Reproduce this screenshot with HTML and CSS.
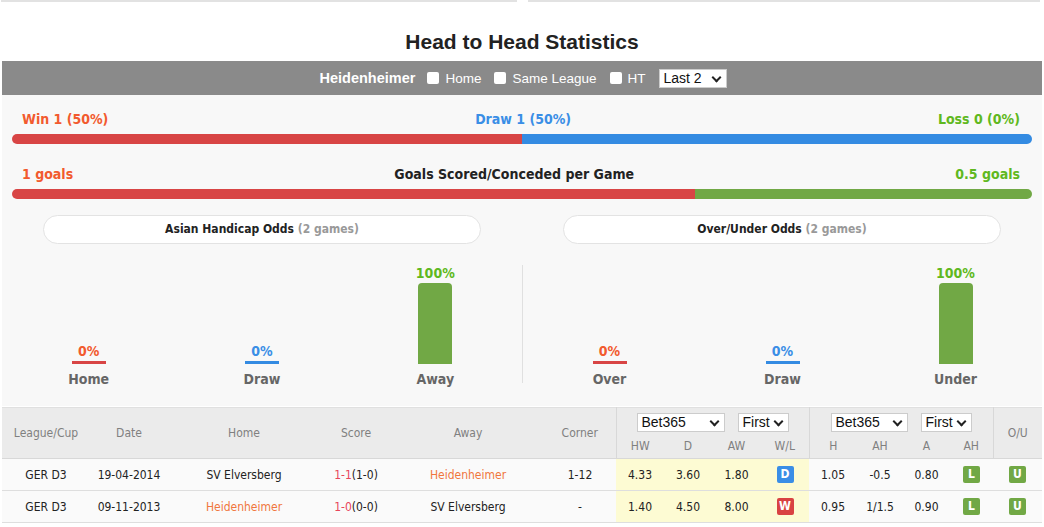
FILE: index.html
```html
<!DOCTYPE html>
<html>
<head>
<meta charset="utf-8">
<link rel="stylesheet" href="styles.css">
</head>
<body>
<div class="page">
  <div class="topline"><span class="tl-left"></span><span class="tl-right"></span></div>
  <h1 class="title">Head to Head Statistics</h1>
  <div class="filterbar">
    <span class="team">Heidenheimer</span>
    <label class="chk"><span class="box"></span>Home</label>
    <label class="chk"><span class="box"></span>Same League</label>
    <label class="chk"><span class="box"></span>HT</label>
    <span class="sel sel-last">Last 2<span class="caret"></span></span>
  </div>
  <div class="panel">
    <div class="stat-labels">
      <span class="c-red">Win 1 (50%)</span>
      <span class="c-blue">Draw 1 (50%)</span>
      <span class="c-green">Loss 0 (0%)</span>
    </div>
    <div class="bar">
      <span class="seg red" style="width:50%"></span>
      <span class="seg blue" style="width:50%"></span>
    </div>
    <div class="stat-labels second">
      <span class="c-red">1 goals</span>
      <span class="c-black">Goals Scored/Conceded per Game</span>
      <span class="c-green">0.5 goals</span>
    </div>
    <div class="bar">
      <span class="seg red" style="width:67%"></span>
      <span class="seg green" style="width:33%"></span>
    </div>
    <div class="halves">
      <div class="half">
        <div class="pill">Asian Handicap Odds <span class="muted">(2 games)</span></div>
        <div class="chart">
          <div class="col"><span class="pct c-red">0%</span><span class="vbar red" style="height:3px"></span><span class="name">Home</span></div>
          <div class="col"><span class="pct c-blue">0%</span><span class="vbar blue" style="height:3px"></span><span class="name">Draw</span></div>
          <div class="col"><span class="pct c-green">100%</span><span class="vbar green tall" style="height:82px"></span><span class="name">Away</span></div>
        </div>
      </div>
      <div class="half">
        <div class="pill">Over/Under Odds <span class="muted">(2 games)</span></div>
        <div class="chart divided">
          <div class="col"><span class="pct c-red">0%</span><span class="vbar red" style="height:3px"></span><span class="name">Over</span></div>
          <div class="col"><span class="pct c-blue">0%</span><span class="vbar blue" style="height:3px"></span><span class="name">Draw</span></div>
          <div class="col"><span class="pct c-green">100%</span><span class="vbar green tall" style="height:82px"></span><span class="name">Under</span></div>
        </div>
      </div>
    </div>
  </div>
  <table class="h2h">
    <colgroup>
      <col style="width:88px"><col style="width:78px"><col style="width:152px"><col style="width:72px"><col style="width:152px"><col style="width:72px">
      <col style="width:48px"><col style="width:48px"><col style="width:49px"><col style="width:48px">
      <col style="width:48px"><col style="width:46px"><col style="width:47px"><col style="width:43px">
      <col style="width:49px">
    </colgroup>
    <thead>
      <tr class="hr1">
        <th rowspan="2">League/Cup</th>
        <th rowspan="2">Date</th>
        <th rowspan="2">Home</th>
        <th rowspan="2">Score</th>
        <th rowspan="2">Away</th>
        <th rowspan="2">Corner</th>
        <th colspan="4" class="grp sels"><span class="sel sel-bet">Bet365<span class="caret"></span></span><span class="sel sel-first">First<span class="caret"></span></span></th>
        <th colspan="4" class="grp sels"><span class="sel sel-bet2">Bet365<span class="caret"></span></span><span class="sel sel-first">First<span class="caret"></span></span></th>
        <th rowspan="2" class="grp">O/U</th>
      </tr>
      <tr class="hr2">
        <th class="gl">HW</th><th>D</th><th>AW</th><th>W/L</th>
        <th class="gl">H</th><th>AH</th><th>A</th><th>AH</th>
      </tr>
    </thead>
    <tbody>
      <tr>
        <td>GER D3</td>
        <td>19-04-2014</td>
        <td>SV Elversberg</td>
        <td><span class="sc">1-1</span>(1-0)</td>
        <td class="team-c">Heidenheimer</td>
        <td>1-12</td>
        <td class="y">4.33</td><td class="y">3.60</td><td class="y">1.80</td><td class="y"><span class="badge b-blue">D</span></td>
        <td>1.05</td><td>-0.5</td><td>0.80</td><td><span class="badge b-green">L</span></td>
        <td><span class="badge b-green">U</span></td>
      </tr>
      <tr>
        <td>GER D3</td>
        <td>09-11-2013</td>
        <td class="team-c">Heidenheimer</td>
        <td><span class="sc">1-0</span>(0-0)</td>
        <td>SV Elversberg</td>
        <td>-</td>
        <td class="y">1.40</td><td class="y">4.50</td><td class="y">8.00</td><td class="y"><span class="badge b-red">W</span></td>
        <td>0.95</td><td>1/1.5</td><td>0.90</td><td><span class="badge b-green">L</span></td>
        <td><span class="badge b-green">U</span></td>
      </tr>
    </tbody>
  </table>
</div>
</body>
</html>
```
FILE: styles.css
```css
html, body { margin: 0; padding: 0; background: #fff; }
body { font-family: "DejaVu Sans Condensed", "DejaVu Sans", sans-serif; color: #222; }
.page { width: 1040px; margin-left: 2px; }

.topline { display: flex; height: 2px; margin-left: -1px; }
.tl-left { width: 516px; background: #e2e2e2; }
.tl-right { width: 512px; margin-left: 11px; background: #e2e2e2; }

.title {
  margin: 0; height: 59px; box-sizing: border-box; padding-top: 28px;
  text-align: center; font-family: "Liberation Sans Narrow", "Liberation Sans", sans-serif;
  font-weight: bold; font-size: 21px; line-height: 24px; color: #222;
}

.filterbar {
  height: 34px; background: #8a8a8a; display: flex; align-items: center; justify-content: center;
  font-family: "Liberation Sans", Arial, sans-serif; font-size: 13.5px; color: #fff;
  padding-left: 2px;
}
.team { font-weight: bold; margin-right: 12px; font-size: 14.5px; }
.chk { display: flex; align-items: center; margin-right: 13px; }
.box { width: 12px; height: 12px; background: #fff; border-radius: 2px; margin-right: 6px; }
.sel {
  position: relative; display: inline-block; background: #fff; color: #111; box-sizing: border-box;
  border: 1px solid #ccc; height: 19px; line-height: 17px; font-size: 14px; padding-left: 4px;
  font-family: "Liberation Sans", Arial, sans-serif; text-align: left; vertical-align: top;
}
.caret {
  position: absolute; right: 6px; top: 4px; width: 5px; height: 5px;
  border-right: 2px solid #222; border-bottom: 2px solid #222; transform: rotate(45deg);
}
.sel-last { width: 68px; }

.panel { background: #f8f8f8; padding: 16px 10px 19px; }
.stat-labels {
  display: flex; justify-content: space-between; padding: 0 12px 0 10px;
  font-weight: bold; font-size: 14px; line-height: 16px;
}
.stat-labels.second { margin-top: 22px; }
.c-red { color: #f25a2e; }
.c-blue { color: #3a8ee6; }
.c-green { color: #5fb820; }
.c-black { color: #222; }
.bar { display: flex; height: 10px; border-radius: 5px; overflow: hidden; margin-top: 7px; }
.seg { display: block; height: 100%; }
.red { background: #d84545; }
.blue { background: #348be2; }
.green { background: #71a845; }

.halves { display: flex; margin: 16px -10px 0; }
.half { width: 520px; }
.pill {
  margin: 0 41px 0 41px; height: 29px; box-sizing: border-box; border: 1px solid #e3e3e3;
  background: #fff; border-radius: 15px; text-align: center; font-size: 12px; font-weight: bold;
  line-height: 27px; color: #222;
}
.muted { color: #999; }
.chart { display: flex; margin-top: 21px; height: 122px; }
.chart.divided { border-left: 1px solid #e0e0e0; height: 118px; margin-bottom: 4px; }
.col { flex: 1; display: flex; flex-direction: column; align-items: center; justify-content: flex-end; }
.pct { font-size: 14px; font-weight: bold; line-height: 16px; margin-bottom: 2px; }
.vbar { display: block; width: 34px; }
.vbar.tall { border-radius: 4px 4px 0 0; }
.name { font-size: 14px; font-weight: bold; color: #666; line-height: 16px; margin-top: 7px; }
.chart.divided .name { margin-bottom: -4px; }

.h2h {
  width: 1040px; table-layout: fixed; border-collapse: collapse; font-size: 12px;
  border-top: 1px solid #e0e0e0; margin-top: 1px;
}
.h2h th {
  background: #ebebeb; color: #808080; font-weight: normal; padding: 0; text-align: center;
  vertical-align: middle; line-height: 14px;
}
.hr1 th.sels { padding: 5px 0 2px; line-height: 0; vertical-align: top; }
.hr2 th { height: 24px; }
.h2h thead tr:last-child th, .h2h thead th[rowspan] { border-bottom: 1px solid #d8d8d8; }
.grp { border-left: 1px solid #d8d8d8; white-space: nowrap; }
.gl { border-left: 1px solid #d8d8d8; }
.sel-bet { width: 88px; margin-right: 13px; }
.sel-bet2 { width: 77px; margin-right: 13px; }
.sel-first { width: 51px; }
.h2h td {
  height: 31px; text-align: center; border-bottom: 1px solid #dedede; background: #fafafa;
  color: #222; padding: 0; white-space: nowrap;
}
.h2h td.y { background: #fdfbd3; }
.sc { color: #e8455a; }
.h2h td.team-c { color: #f0763d; }
.badge {
  display: inline-block; width: 17px; height: 17px; border-radius: 2px; color: #fff;
  font-weight: bold; line-height: 17px; font-size: 12px; vertical-align: middle;
}
.b-blue { background: #3a8ee6; }
.b-red { background: #d94242; }
.b-green { background: #71a845; }
```
